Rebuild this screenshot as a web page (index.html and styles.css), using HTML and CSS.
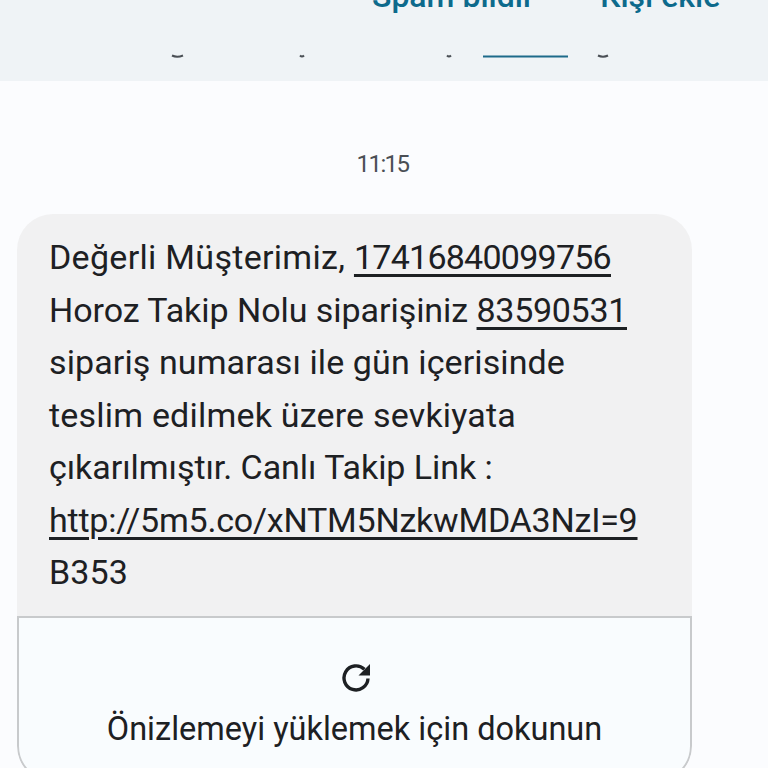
FILE: index.html
```
<!DOCTYPE html>
<html lang="tr">
<head>
<meta charset="utf-8">
<title>Mesaj</title>
<link rel="stylesheet" href="styles.css">
</head>
<body>
<header class="top">
  <div class="actions">
    <span class="action">Spam bildir</span>
    <span class="action">Kişi ekle</span>
  </div>
  <svg class="remnants" width="768" height="12" viewBox="0 0 768 12" aria-hidden="true">
    <path d="M172 5.5q5 2.5 11 0" class="dark"/>
    <path d="M300 5.5q2 2 4 0" class="dark"/>
    <path d="M447 5.5q2 2 4 0" class="dark"/>
    <path d="M483 6.5h85" class="link"/>
    <path d="M598 5.5q5 2.5 10 0" class="dark"/>
  </svg>
</header>
<main class="thread">
  <div class="time">11:15</div>
  <article class="bubble">
    <p class="text"><span class="wide">Değerli Müşterimiz, </span><a class="lnk num-long">17416840099756</a><br><span class="tight">Horoz Takip Nolu siparişiniz </span><a class="lnk num-short">83590531</a><br>sipariş numarası ile gün içerisinde<br><span class="wide-soft">teslim edilmek üzere sevkiyata</span><br><span class="tight">çıkarılmıştır. Canlı Takip Link :</span><br><a class="lnk url">http://5m5.co/xNTM5NzkwMDA3NzI=9</a><br>B353</p>
    <div class="preview">
      <svg class="reload" width="32" height="32" viewBox="0 0 32 32" aria-hidden="true">
        <path d="M27 17.5A12 12 0 1 1 23.4 8.3" fill="none" stroke="#1d2023" stroke-width="3.4"/>
        <path d="M29 3V14.5H17.5Z" fill="#1d2023"/>
      </svg>
      <span class="label">Önizlemeyi yüklemek için dokunun</span>
    </div>
  </article>
</main>
</body>
</html>
```
FILE: styles.css
```
html, body {
  margin: 0;
  height: 768px;
  overflow: hidden;
  background: #fbfcfe;
  font-family: Roboto, "Noto Sans", sans-serif;
}
.top {
  height: 81px;
  background: #eff3f6;
  overflow: hidden;
}
.actions {
  display: flex;
  margin-top: -23px;
  height: 73px;
  padding-left: 372px;
  gap: 66px;
  font-size: 32px;
  line-height: 38px;
  font-weight: 500;
  color: #0d6a8c;
  white-space: nowrap;
}
.remnants {
  display: block;
  fill: none;
  stroke-width: 2;
}
.dark { stroke: #4a4f55; }
.link { stroke: #1d6a8a; }
.thread {
  display: flex;
  flex-direction: column;
  align-items: flex-start;
  height: 687px;
  overflow: hidden;
  padding-left: 17px;
}
.time {
  margin-top: 68px;
  width: 731px;
  text-align: center;
  font-size: 24px;
  line-height: 30px;
  letter-spacing: -1.6px;
  color: #4a4f55;
}
.bubble {
  flex: none;
  margin-top: 35px;
  width: 675px;
  background: #f1f1f2;
  border-radius: 36px;
  overflow: hidden;
}
.text {
  margin: 0;
  padding: 17px 32px 17px 32px;
  font-size: 34px;
  line-height: 52.5px;
  letter-spacing: 0.1px;
  color: #1d2023;
  white-space: nowrap;
}
.wide { letter-spacing: 0.3px; }
.wide-soft { letter-spacing: 0.2px; }
.tight { letter-spacing: -0.05px; }
.lnk {
  text-decoration: underline;
  text-decoration-thickness: 3px;
  text-underline-offset: 5px;
}
.num-long { letter-spacing: -0.75px; }
.num-short { letter-spacing: -0.3px; }
.url { letter-spacing: -0.22px; }
.preview {
  display: flex;
  flex-direction: column;
  align-items: center;
  box-sizing: border-box;
  height: 166px;
  padding-top: 43px;
  background: #f9fcfe;
  border: 2px solid #c8cacc;
  border-radius: 0 0 36px 36px;
}
.reload {
  display: block;
  margin-left: 4px;
}
.label {
  margin-top: 16px;
  font-size: 32.5px;
  line-height: 40px;
  color: #1d2023;
}
```
